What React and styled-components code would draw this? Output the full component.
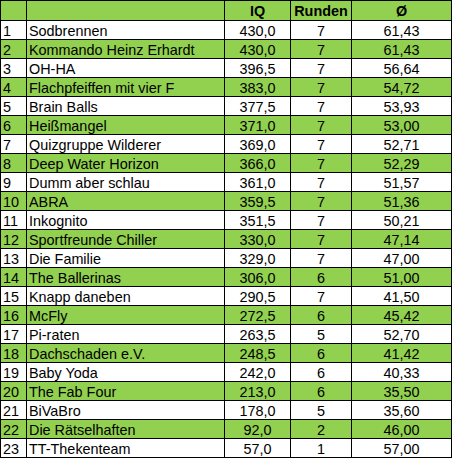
import React from 'react';
import styled, { createGlobalStyle } from 'styled-components';

const GlobalStyle = createGlobalStyle`
  html, body {
    margin: 0;
    padding: 0;
    background: #ffffff;
  }
`;

const StyledSheet = styled.div`
  display: grid;
  grid-template-columns: 25px 197px 65px 60px 99px;
  grid-auto-rows: 18px;
  grid-template-rows: 19px;
  gap: 1px;
  padding: 1px;
  width: max-content;
  background-color: #000000;
  font-family: 'Liberation Sans', Arial, sans-serif;
  font-size: 14.4px;
  color: #000000;
`;

const StyledCell = styled.div`
  background-color: ${props => (props.$green ? '#92d050' : '#ffffff')};
  font-weight: ${props => (props.$head ? 700 : 400)};
  text-align: ${props => props.$align || 'left'};
  padding: 1px ${props => (props.$align === 'center' ? '0' : '2px')} 0;
  line-height: 18px;
  white-space: nowrap;
  overflow: hidden;
`;

const teams = [
  ['Sodbrennen', '430,0', 7, '61,43'],
  ['Kommando Heinz Erhardt', '430,0', 7, '61,43'],
  ['OH-HA', '396,5', 7, '56,64'],
  ['Flachpfeiffen mit vier F', '383,0', 7, '54,72'],
  ['Brain Balls', '377,5', 7, '53,93'],
  ['Heißmangel', '371,0', 7, '53,00'],
  ['Quizgruppe Wilderer', '369,0', 7, '52,71'],
  ['Deep Water Horizon', '366,0', 7, '52,29'],
  ['Dumm aber schlau', '361,0', 7, '51,57'],
  ['ABRA', '359,5', 7, '51,36'],
  ['Inkognito', '351,5', 7, '50,21'],
  ['Sportfreunde Chiller', '330,0', 7, '47,14'],
  ['Die Familie', '329,0', 7, '47,00'],
  ['The Ballerinas', '306,0', 6, '51,00'],
  ['Knapp daneben', '290,5', 7, '41,50'],
  ['McFly', '272,5', 6, '45,42'],
  ['Pi-raten', '263,5', 5, '52,70'],
  ['Dachschaden e.V.', '248,5', 6, '41,42'],
  ['Baby Yoda', '242,0', 6, '40,33'],
  ['The Fab Four', '213,0', 6, '35,50'],
  ['BiVaBro', '178,0', 5, '35,60'],
  ['Die Rätselhaften', '92,0', 2, '46,00'],
  ['TT-Thekenteam', '57,0', 1, '57,00'],
];

const App = () => {
  return (
    <>
      <GlobalStyle />
      <StyledSheet>
        <StyledCell $green $head />
        <StyledCell $green $head />
        <StyledCell $green $head $align="center">IQ</StyledCell>
        <StyledCell $green $head $align="center">Runden</StyledCell>
        <StyledCell $green $head $align="center">Ø</StyledCell>

        {teams.map(([name, iq, rounds, avg], i) => {
          const green = i % 2 === 1;
          return (
            <React.Fragment key={name}>
              <StyledCell $green={green}>{i + 1}</StyledCell>
              <StyledCell $green={green}>{name}</StyledCell>
              <StyledCell $green={green} $align="center">{iq}</StyledCell>
              <StyledCell $green={green} $align="center">{rounds}</StyledCell>
              <StyledCell $green={green} $align="center">{avg}</StyledCell>
            </React.Fragment>
          );
        })}
      </StyledSheet>
    </>
  );
};

export default App;
